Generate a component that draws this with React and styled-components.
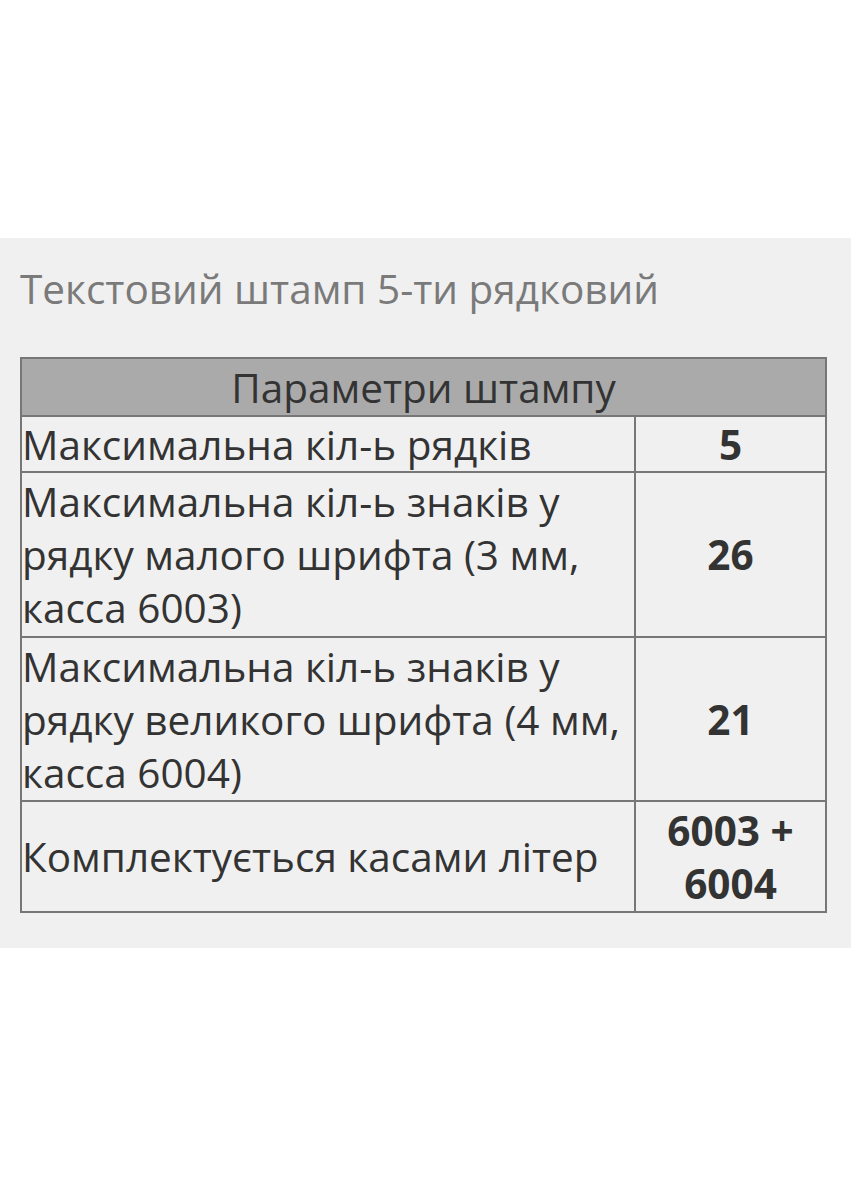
import React from "react";
import styled, { createGlobalStyle } from "styled-components";

const Global = createGlobalStyle`
  html, body { margin: 0; padding: 0; background: #ffffff; }
  body { font-family: "Open Sans", "Noto Sans", sans-serif; }
`;

const Page = styled.div`
  padding-top: 238px;
  width: 851px;
  min-height: 1184px;
  box-sizing: border-box;
`;

const Panel = styled.section`
  background: #f0f0f0;
  padding: 24px 24px 35px 20px;
`;

const Title = styled.h2`
  margin: 0 0 42px 0;
  font-weight: 400;
  font-size: 40.5px;
  line-height: 53px;
  color: #7a7a7a;
`;

const Table = styled.table`
  width: 807px;
  border-collapse: collapse;
  font-size: 40.5px;
  line-height: 53px;
  color: #333;
`;

const HeadCell = styled.th`
  background: #aaaaaa;
  border: 2px solid #777;
  font-weight: 400;
  height: 56px;
  padding: 0;
  text-align: center;
  color: #333;
`;

const Cell = styled.td`
  border: 2px solid #777;
  padding: ${(p) => (p.$value ? "0 2px" : "0 2px 0 0")};
  text-align: ${(p) => (p.$value ? "center" : "left")};
  font-weight: ${(p) => (p.$value ? 700 : 400)};
  width: ${(p) => (p.$value ? "185px" : "auto")};
  vertical-align: middle;
  height: ${(p) => p.$h}px;
`;

const rows = [
  { label: "Максимальна кіл-ь рядків", value: "5", h: 54 },
  {
    label: "Максимальна кіл-ь знаків у рядку малого шрифта (3 мм, касса 6003)",
    value: "26",
    h: 163,
  },
  {
    label: "Максимальна кіл-ь знаків у рядку великого шрифта (4 мм, касса 6004)",
    value: "21",
    h: 162,
  },
  { label: "Комплектується касами літер", value: "6003 + 6004", h: 109 },
];

export default function App() {
  return (
    <Page>
      <Global />
      <Panel>
        <Title>Текстовий штамп 5-ти рядковий</Title>
        <Table>
          <thead>
            <tr>
              <HeadCell colSpan={2}>Параметри штампу</HeadCell>
            </tr>
          </thead>
          <tbody>
            {rows.map((r) => (
              <tr key={r.label}>
                <Cell $h={r.h}>{r.label}</Cell>
                <Cell $value $h={r.h}>{r.value}</Cell>
              </tr>
            ))}
          </tbody>
        </Table>
      </Panel>
    </Page>
  );
}
